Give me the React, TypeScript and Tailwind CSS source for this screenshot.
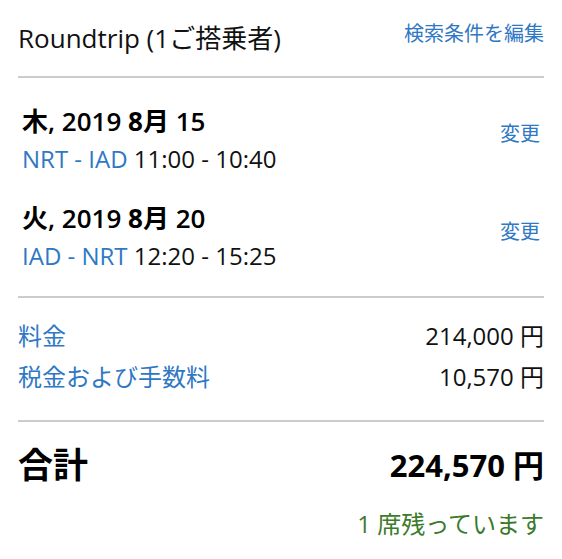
import React from "react";

const font = { fontFamily: '"Open Sans", "Noto Sans CJK JP", sans-serif' };

function Segment({ day, date, route, times, linkTop }: { day: string; date: string; route: string; times: string; linkTop: string }) {
  return (
    <div className="flex items-start justify-between">
      <div className="flex flex-col pl-[4px]">
        <div className="text-[26px] leading-[38px] font-semibold text-black">
          <span className="font-bold">{day}</span>
          <span>, 2019 </span>
          <span className="font-bold">8月</span>
          <span> {date}</span>
        </div>
        <div className="text-[24px] leading-[38px]">
          <span className="text-[#2f78c4]">{route}</span>{" "}
          <span className="text-[#111]">{times}</span>
        </div>
      </div>
      <a className={`text-[20px] leading-[28px] text-[#2f78c4] mr-[4px] ${linkTop}`}>変更</a>
    </div>
  );
}

export default function App() {
  return (
    <div className="w-[562px] h-[559px] bg-white px-[18px] pt-[19px]" style={font}>
      <div className="flex items-start justify-between">
        <div className="text-[26px] leading-[38px] text-[#111]">Roundtrip (1ご搭乗者)</div>
        <a className="text-[20px] leading-[28px] mt-[1px] text-[#2f78c4]">検索条件を編集</a>
      </div>
      <div className="h-[2px] bg-[#cccccc] mt-[19px]" />
      <div className="pt-[24px] flex flex-col gap-[21px]">
        <Segment day="木" date="15" route="NRT - IAD" times="11:00 - 10:40" linkTop="mt-[18px]" />
        <Segment day="火" date="20" route="IAD - NRT" times="12:20 - 15:25" linkTop="mt-[19px]" />
      </div>
      <div className="h-[2px] bg-[#cccccc] mt-[21px]" />
      <div className="pt-[19px] flex flex-col gap-[3px]">
        <div className="flex justify-between text-[24px] leading-[38px]">
          <span className="text-[#2f78c4]">料金</span>
          <span className="text-[#111]">214,000 円</span>
        </div>
        <div className="flex justify-between text-[24px] leading-[38px]">
          <span className="text-[#2f78c4]">税金および手数料</span>
          <span className="text-[#111]">10,570 円</span>
        </div>
      </div>
      <div className="h-[2px] bg-[#cccccc] mt-[24px]" />
      <div className="flex justify-between items-center pt-[21px]">
        <span className="text-[35px] leading-[44px] font-bold text-black">合計</span>
        <span className="text-[31px] leading-[44px] font-bold text-black">224,570 円</span>
      </div>
      <div className="flex justify-end mt-[18px]">
        <span className="text-[24px] leading-[38px] text-[#3c7a2b]">1 席残っています</span>
      </div>
    </div>
  );
}
